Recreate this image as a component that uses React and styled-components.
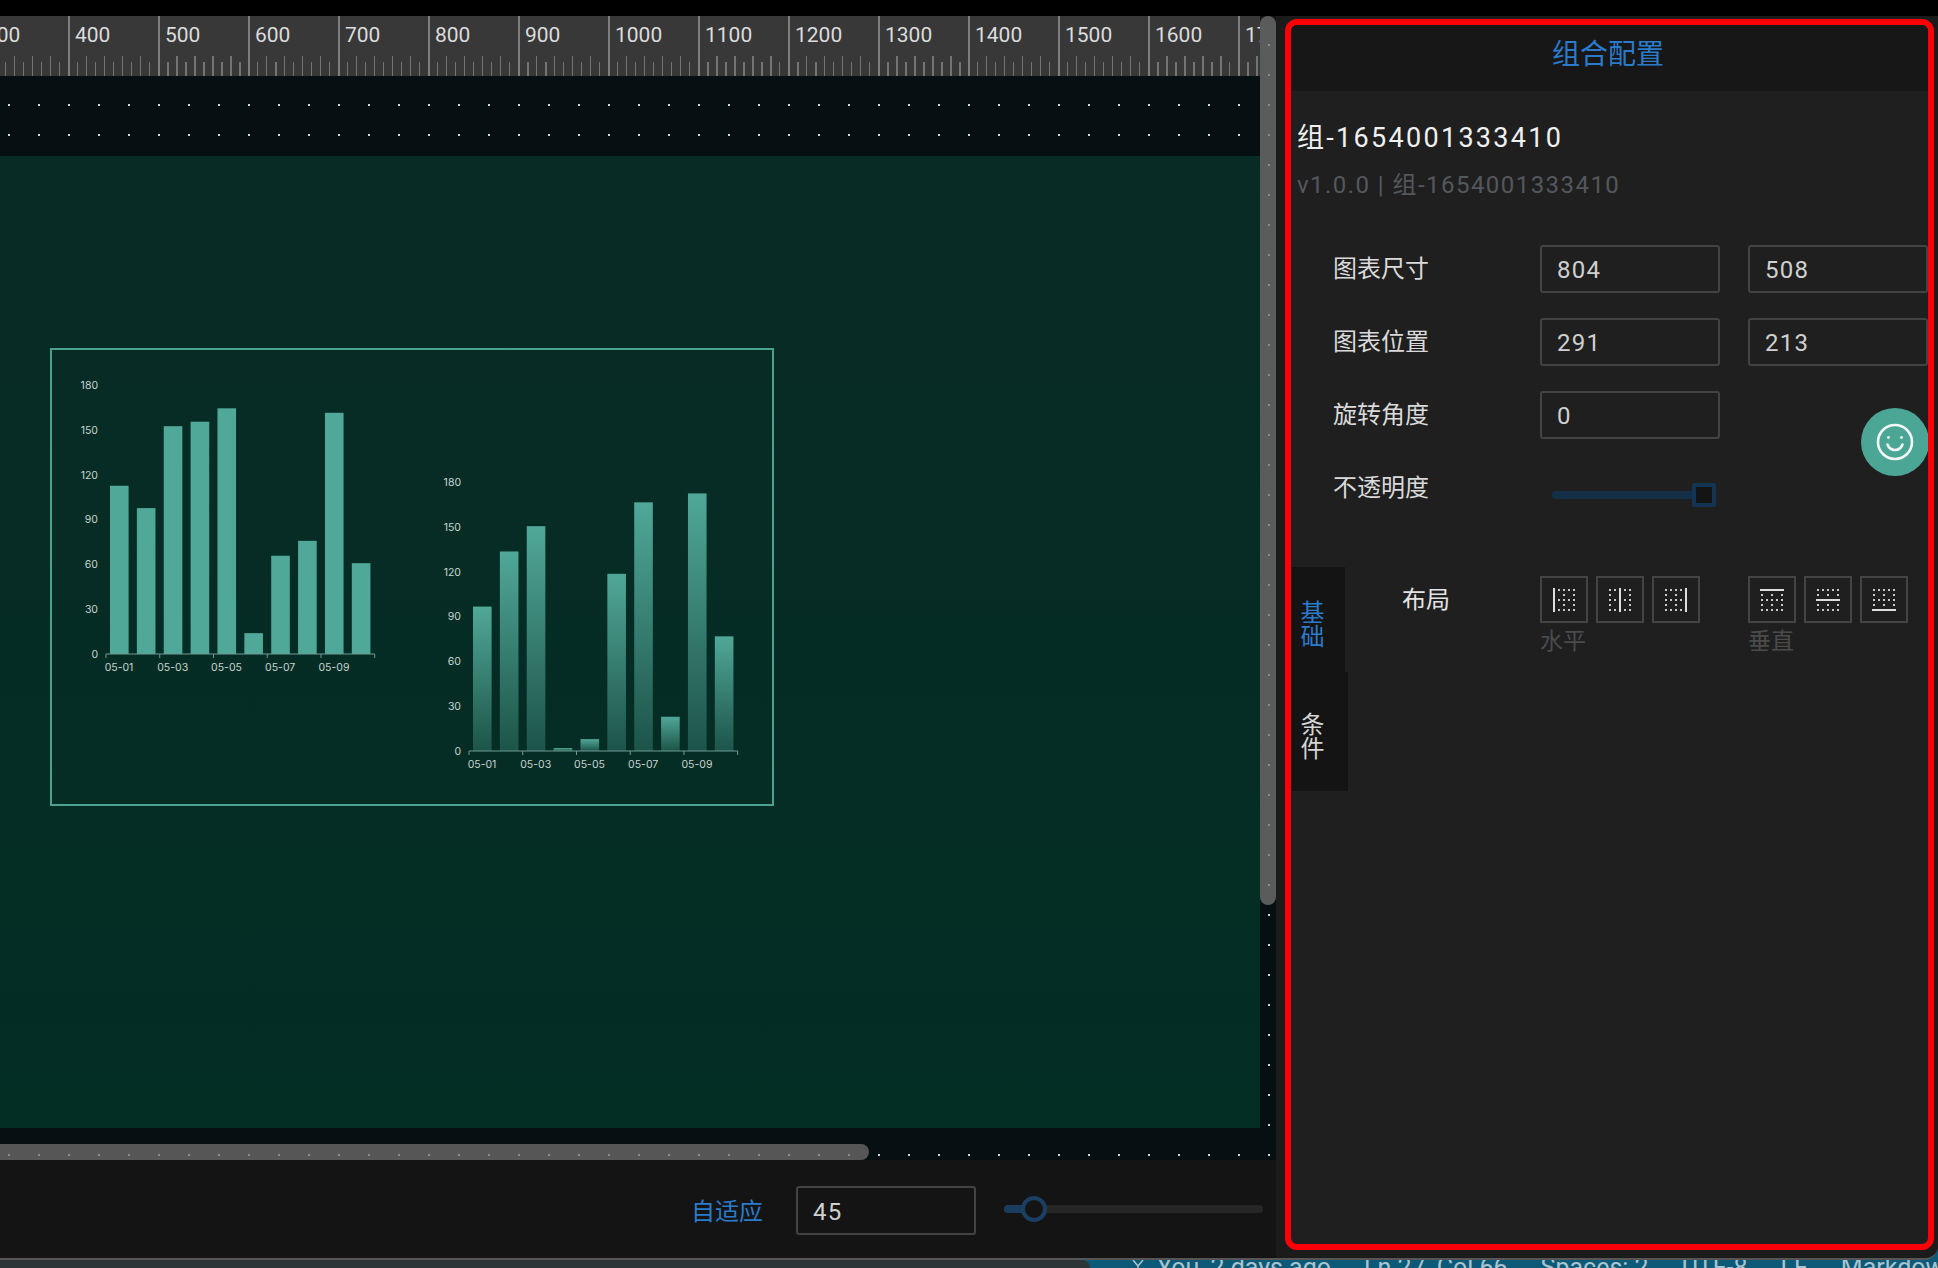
import React from "react";
import styled, { createGlobalStyle } from "styled-components";

const GlobalStyle = createGlobalStyle`
  html, body {
    margin: 0;
    padding: 0;
    background: #000000;
  }
  * {
    box-sizing: border-box;
  }
`;

const Page = styled.div`
  display: flex;
  flex-direction: column;
  width: 1938px;
  height: 1268px;
  overflow: hidden;
  background: #0c5a78;
  font-family: Roboto, "Noto Sans CJK SC", sans-serif;
`;

const TopStrip = styled.div`
  height: 16px;
  flex-shrink: 0;
  background: #000000;
`;

const Window = styled.div`
  display: flex;
  height: 1244px;
  flex-shrink: 0;
  overflow: hidden;
  border-bottom: 2px solid #565656;
  border-bottom-right-radius: 14px;
  background: #1c1c1c;
`;

const Workspace = styled.div`
  position: relative;
  display: flex;
  flex-direction: column;
  width: 1276px;
  flex-shrink: 0;
  background: #141414;
`;

const Ruler = styled.div`
  width: 1260px;
  height: 60px;
  flex-shrink: 0;
  overflow: hidden;
  background: #383838;
`;

const RulerTrack = styled.div`
  display: flex;
  margin-left: -22px;
`;

const RulerCell = styled.div`
  width: 90px;
  height: 60px;
  flex-shrink: 0;
  padding: 7px 0 0 5px;
  border-left: 2px solid #7e7e7e;
  color: #dcdcdc;
  font-size: 21px;
  line-height: 24px;
  background-image: repeating-linear-gradient(
      90deg,
      transparent 0 7px,
      #747474 7px 8.5px,
      transparent 8.5px 18px
    ),
    repeating-linear-gradient(
      90deg,
      transparent 0 16px,
      #747474 16px 17.5px,
      transparent 17.5px 18px
    );
  background-repeat: no-repeat;
  background-position: left bottom;
  background-size: 84px 14px, 74px 20px;
`;

const Viewport = styled.div`
  position: relative;
  display: flex;
  height: 1084px;
  flex-shrink: 0;
  padding: 80px 16px 32px 0;
  background-color: #060f12;
  background-image: radial-gradient(circle, #d8d8d8 1px, transparent 1.4px);
  background-size: 30px 30px;
  background-position: -6px 14px;
`;

const Canvas = styled.div`
  position: relative;
  flex: 1;
  background: linear-gradient(180deg, #082b25 0%, #032e24 100%);
`;

const GroupFrame = styled.div`
  position: absolute;
  left: 50px;
  top: 192px;
  width: 724px;
  height: 458px;
  border: 2px solid #4ca090;
`;

const ChartSvg = styled.svg`
  position: absolute;
  left: ${(p) => p.$left}px;
  top: ${(p) => p.$top}px;
  width: 320px;
  height: 305px;
`;

const ChartLabel = styled.text`
  fill: #c6d4d0;
  font-family: Inter, Roboto, sans-serif;
  font-size: 10.5px;
`;

const VerticalScrollbar = styled.div`
  position: absolute;
  top: 0;
  left: 1260px;
  width: 16px;
  height: 889px;
  border-radius: 8px;
  background-color: #5a5b5b;
  background-image: radial-gradient(circle, #8b8b8b 1px, transparent 1.6px);
  background-size: 30px 30px;
  background-position: -6px 14px;
`;

const HorizontalScrollbar = styled.div`
  position: absolute;
  left: 0;
  bottom: 0;
  width: 869px;
  height: 16px;
  border-radius: 0 8px 8px 0;
  background-color: #555655;
  background-image: radial-gradient(circle, #8b8b8b 1px, transparent 1.6px);
  background-size: 30px 30px;
  background-position: -6px -4px;
`;

const BottomBar = styled.div`
  display: flex;
  align-items: center;
  justify-content: flex-end;
  flex: 1;
  padding-right: 13px;
  padding-top: 3px;
  background: #141414;
`;

const FitButton = styled.div`
  margin-right: 33px;
  margin-bottom: 2px;
  color: #2b7bcb;
  font-size: 24px;
`;

const NumberField = styled.div`
  display: flex;
  align-items: center;
  width: 180px;
  height: ${(p) => p.$height || 48}px;
  flex-shrink: 0;
  padding: 2px 0 0 15px;
  border: 2px solid #434343;
  border-radius: 3px;
  color: #d0d0d0;
  font-size: 24px;
  letter-spacing: 1.2px;
`;

const ZoomSlider = styled.div`
  position: relative;
  width: 259px;
  height: 8px;
  margin-left: 28px;
  margin-top: -4px;
  border-radius: 4px;
  background: #262626;
`;

const ZoomFill = styled.div`
  width: 24px;
  height: 100%;
  border-radius: 4px;
  background: #1a3d5f;
`;

const ZoomHandle = styled.div`
  position: absolute;
  left: 17px;
  top: -9px;
  width: 26px;
  height: 26px;
  border: 4px solid #1b3f63;
  border-radius: 50%;
  background: #141414;
`;

const PanelColumn = styled.div`
  flex: 1;
  padding: 3px 7px 0 9px;
  background: #1b1b1b;
`;

const Panel = styled.div`
  position: relative;
  display: flex;
  flex-direction: column;
  height: 1231px;
  overflow: hidden;
  border: 6px solid #fb0007;
  border-radius: 12px;
  background: #1f1f1f;
`;

const PanelHeader = styled.div`
  display: flex;
  align-items: center;
  justify-content: center;
  height: 66px;
  flex-shrink: 0;
  padding: 0 3px 12px 0;
  background: #171717;
  color: #2b7bcb;
  font-size: 28px;
`;

const GroupInfo = styled.div`
  padding: 27px 0 0 6px;
`;

const GroupTitle = styled.div`
  color: #f0f0f0;
  font-size: 27px;
  line-height: 40px;
  letter-spacing: 2.3px;
`;

const GroupVersion = styled.div`
  margin-top: 9px;
  color: #54585c;
  font-size: 24px;
  line-height: 36px;
  letter-spacing: 1.45px;
`;

const Form = styled.div`
  display: flex;
  flex-direction: column;
  gap: 25px;
  margin-top: 42px;
  padding-left: 42px;
`;

const FormRow = styled.div`
  display: flex;
  align-items: center;
  gap: 28px;
  height: 48px;
`;

const FormLabel = styled.div`
  width: 179px;
  flex-shrink: 0;
  margin-bottom: 5px;
  color: #dadada;
  font-size: 24px;
`;

const OpacitySlider = styled.div`
  position: relative;
  width: 164px;
  height: 8px;
  margin: 14px 0 0 12px;
  border-radius: 4px;
  background: #143049;
`;

const OpacityHandle = styled.div`
  position: absolute;
  right: 0;
  top: -8px;
  width: 24px;
  height: 24px;
  border: 4px solid #143454;
  border-radius: 2px;
  background: #141414;
`;

const Section = styled.div`
  display: flex;
  margin-top: 55px;
`;

const TabRail = styled.div`
  display: flex;
  flex-direction: column;
  width: 57px;
  flex-shrink: 0;
`;

const Tab = styled.div`
  display: flex;
  align-items: flex-end;
  justify-content: center;
  width: ${(p) => p.$width}px;
  height: ${(p) => p.$height}px;
  padding: 8px 0 0 7px;
  background: #141414;
  color: ${(p) => (p.$active ? "#2b7bcb" : "#d4d4d4")};
  font-size: 24px;
  line-height: 24px;
  writing-mode: vertical-rl;
  text-orientation: upright;
`;

const LayoutContent = styled.div`
  display: flex;
  padding: 9px 0 0 54px;
`;

const LayoutLabel = styled.div`
  width: 138px;
  flex-shrink: 0;
  padding-top: 7px;
  color: #e4e4e4;
  font-size: 24px;
  line-height: 34px;
`;

const AlignGroup = styled.div`
  display: flex;
  flex-direction: column;
  margin-right: ${(p) => p.$gap || 0}px;
`;

const AlignButtons = styled.div`
  display: flex;
  gap: 8px;
`;

const AlignButton = styled.div`
  display: flex;
  align-items: center;
  justify-content: center;
  width: 48px;
  height: 47px;
  border: 2px solid #444444;
`;

const AlignCaption = styled.div`
  color: #4b4b4b;
  font-size: 23px;
  line-height: 37px;
`;

const FeedbackButton = styled.div`
  position: absolute;
  top: 383px;
  right: -1px;
  display: flex;
  align-items: center;
  justify-content: center;
  width: 68px;
  height: 68px;
  border-radius: 50%;
  background: #4ca696;
`;

const StatusBar = styled.div`
  display: flex;
  height: 8px;
  flex-shrink: 0;
  overflow: hidden;
  color: #a9c3cf;
  font-size: 25px;
  line-height: 16px;
  white-space: nowrap;
`;

const StatusLeft = styled.div`
  width: 1090px;
  flex-shrink: 0;
  border-top-right-radius: 12px;
  background: #2e3537;
`;

const StatusItems = styled.div`
  display: flex;
  gap: 33px;
  padding-left: 42px;
`;

const StatusAuthor = styled.div`
  display: flex;
  gap: 13px;
`;

const rulerMarks = [300, 400, 500, 600, 700, 800, 900, 1000, 1100, 1200, 1300, 1400, 1500, 1600, 1700];
const chartDays = ["05-01", "05-03", "05-05", "05-07", "05-09"];
const chartTicks = [0, 30, 60, 90, 120, 150, 180];
const dotSpots = [0, 1, 2, 3, 4];

function BarChart({ id, left, top, values, fade }) {
  const baseY = 279;
  const originX = 36;
  const scale = 1.489;
  const step = 26.87;
  return (
    <ChartSvg $left={left} $top={top} viewBox="0 0 320 305">
      <defs>
        <linearGradient id={id} x1="0" y1="0" x2="0" y2="1">
          <stop offset="0%" stopColor="#50a898" />
          <stop offset="100%" stopColor={fade ? "#1d5449" : "#50a898"} />
        </linearGradient>
      </defs>
      {chartTicks.map((t) => (
        <ChartLabel key={t} x={28} y={baseY - t * scale + 3.5} textAnchor="end">
          {t}
        </ChartLabel>
      ))}
      {values.map((v, i) => (
        <rect
          key={i}
          x={originX + 4 + i * step}
          y={baseY - v * scale}
          width={18.6}
          height={v * scale}
          fill={`url(#${id})`}
        />
      ))}
      <path
        d={`M${originX} ${baseY}H${originX + step * 10}M${originX} ${baseY}v4`}
        stroke="#6f9c92"
        strokeWidth="1"
        fill="none"
      />
      {[1, 2, 3, 4, 5].map((n) => (
        <path
          key={n}
          d={`M${originX + n * 2 * step} ${baseY}v4`}
          stroke="#6f9c92"
          strokeWidth="1"
        />
      ))}
      {chartDays.map((d, i) => (
        <ChartLabel key={d} x={originX + 13 + i * 2 * step} y={baseY + 17} textAnchor="middle">
          {d}
        </ChartLabel>
      ))}
    </ChartSvg>
  );
}

// dotted grid with one solid guide line, the same drawing for all six buttons
function AlignIcon({ axis, at }) {
  const pos = 2 + at * 10;
  return (
    <svg width="26" height="26" viewBox="0 0 26 26">
      {dotSpots.map((i) =>
        dotSpots.map((j) =>
          i % 2 === 0 || j % 2 === 0 ? (
            <rect key={`${i}-${j}`} x={2 + i * 5} y={2 + j * 5} width="2" height="2" fill="#c8c8c8" />
          ) : null
        )
      )}
      {axis === "x" ? (
        <rect x={pos} y="1" width="2" height="24" fill="#dddddd" />
      ) : (
        <rect x="1" y={pos} width="24" height="2" fill="#dddddd" />
      )}
    </svg>
  );
}

export default function App() {
  return (
    <Page>
      <GlobalStyle />
      <TopStrip />
      <Window>
        <Workspace>
          <Ruler>
            <RulerTrack>
              {rulerMarks.map((m) => (
                <RulerCell key={m}>{m}</RulerCell>
              ))}
            </RulerTrack>
          </Ruler>
          <Viewport>
            <Canvas>
              <GroupFrame>
                <BarChart id="barsA" left={18} top={25} values={[113, 98, 153, 156, 165, 14, 66, 76, 162, 61]} />
                <BarChart id="barsB" left={381} top={122} fade values={[97, 134, 151, 2, 8, 119, 167, 23, 173, 77]} />
              </GroupFrame>
            </Canvas>
            <HorizontalScrollbar />
          </Viewport>
          <BottomBar>
            <FitButton>自适应</FitButton>
            <NumberField $height={49}>45</NumberField>
            <ZoomSlider>
              <ZoomFill />
              <ZoomHandle />
            </ZoomSlider>
          </BottomBar>
          <VerticalScrollbar />
        </Workspace>
        <PanelColumn>
          <Panel>
            <PanelHeader>组合配置</PanelHeader>
            <GroupInfo>
              <GroupTitle>组-1654001333410</GroupTitle>
              <GroupVersion>v1.0.0 | 组-1654001333410</GroupVersion>
            </GroupInfo>
            <Form>
              <FormRow>
                <FormLabel>图表尺寸</FormLabel>
                <NumberField>804</NumberField>
                <NumberField>508</NumberField>
              </FormRow>
              <FormRow>
                <FormLabel>图表位置</FormLabel>
                <NumberField>291</NumberField>
                <NumberField>213</NumberField>
              </FormRow>
              <FormRow>
                <FormLabel>旋转角度</FormLabel>
                <NumberField>0</NumberField>
              </FormRow>
              <FormRow>
                <FormLabel>不透明度</FormLabel>
                <OpacitySlider>
                  <OpacityHandle />
                </OpacitySlider>
              </FormRow>
            </Form>
            <Section>
              <TabRail>
                <Tab $active $width={54} $height={105}>基础</Tab>
                <Tab $width={57} $height={119}>条件</Tab>
              </TabRail>
              <LayoutContent>
                <LayoutLabel>布局</LayoutLabel>
                <AlignGroup $gap={48}>
                  <AlignButtons>
                    <AlignButton><AlignIcon axis="x" at={0} /></AlignButton>
                    <AlignButton><AlignIcon axis="x" at={1} /></AlignButton>
                    <AlignButton><AlignIcon axis="x" at={2} /></AlignButton>
                  </AlignButtons>
                  <AlignCaption>水平</AlignCaption>
                </AlignGroup>
                <AlignGroup>
                  <AlignButtons>
                    <AlignButton><AlignIcon axis="y" at={0} /></AlignButton>
                    <AlignButton><AlignIcon axis="y" at={1} /></AlignButton>
                    <AlignButton><AlignIcon axis="y" at={2} /></AlignButton>
                  </AlignButtons>
                  <AlignCaption>垂直</AlignCaption>
                </AlignGroup>
              </LayoutContent>
            </Section>
            <FeedbackButton>
              <svg width="40" height="40" viewBox="0 0 40 40" fill="none" stroke="#f2f7f6" strokeWidth="2.6">
                <circle cx="20" cy="20" r="17" />
                <circle cx="13.5" cy="15.5" r="1.4" fill="#f2f7f6" stroke="none" />
                <circle cx="26.5" cy="15.5" r="1.4" fill="#f2f7f6" stroke="none" />
                <path d="M12.5 22.5c1.5 4 4 5.5 7.5 5.5s6-1.5 7.5-5.5" strokeLinecap="round" />
              </svg>
            </FeedbackButton>
          </Panel>
        </PanelColumn>
      </Window>
      <StatusBar>
        <StatusLeft />
        <StatusItems>
          <StatusAuthor>
            <svg width="12" height="12" viewBox="0 0 12 12" fill="none" stroke="#a9c3cf" strokeWidth="1.5">
              <path d="M1 0l5 6 5-6M6 6v6" />
            </svg>
            <span>You, 2 days ago</span>
          </StatusAuthor>
          <span>Ln 27, Col 66</span>
          <span>Spaces: 2</span>
          <span>UTF-8</span>
          <span>LF</span>
          <span>Markdown</span>
        </StatusItems>
      </StatusBar>
    </Page>
  );
}
